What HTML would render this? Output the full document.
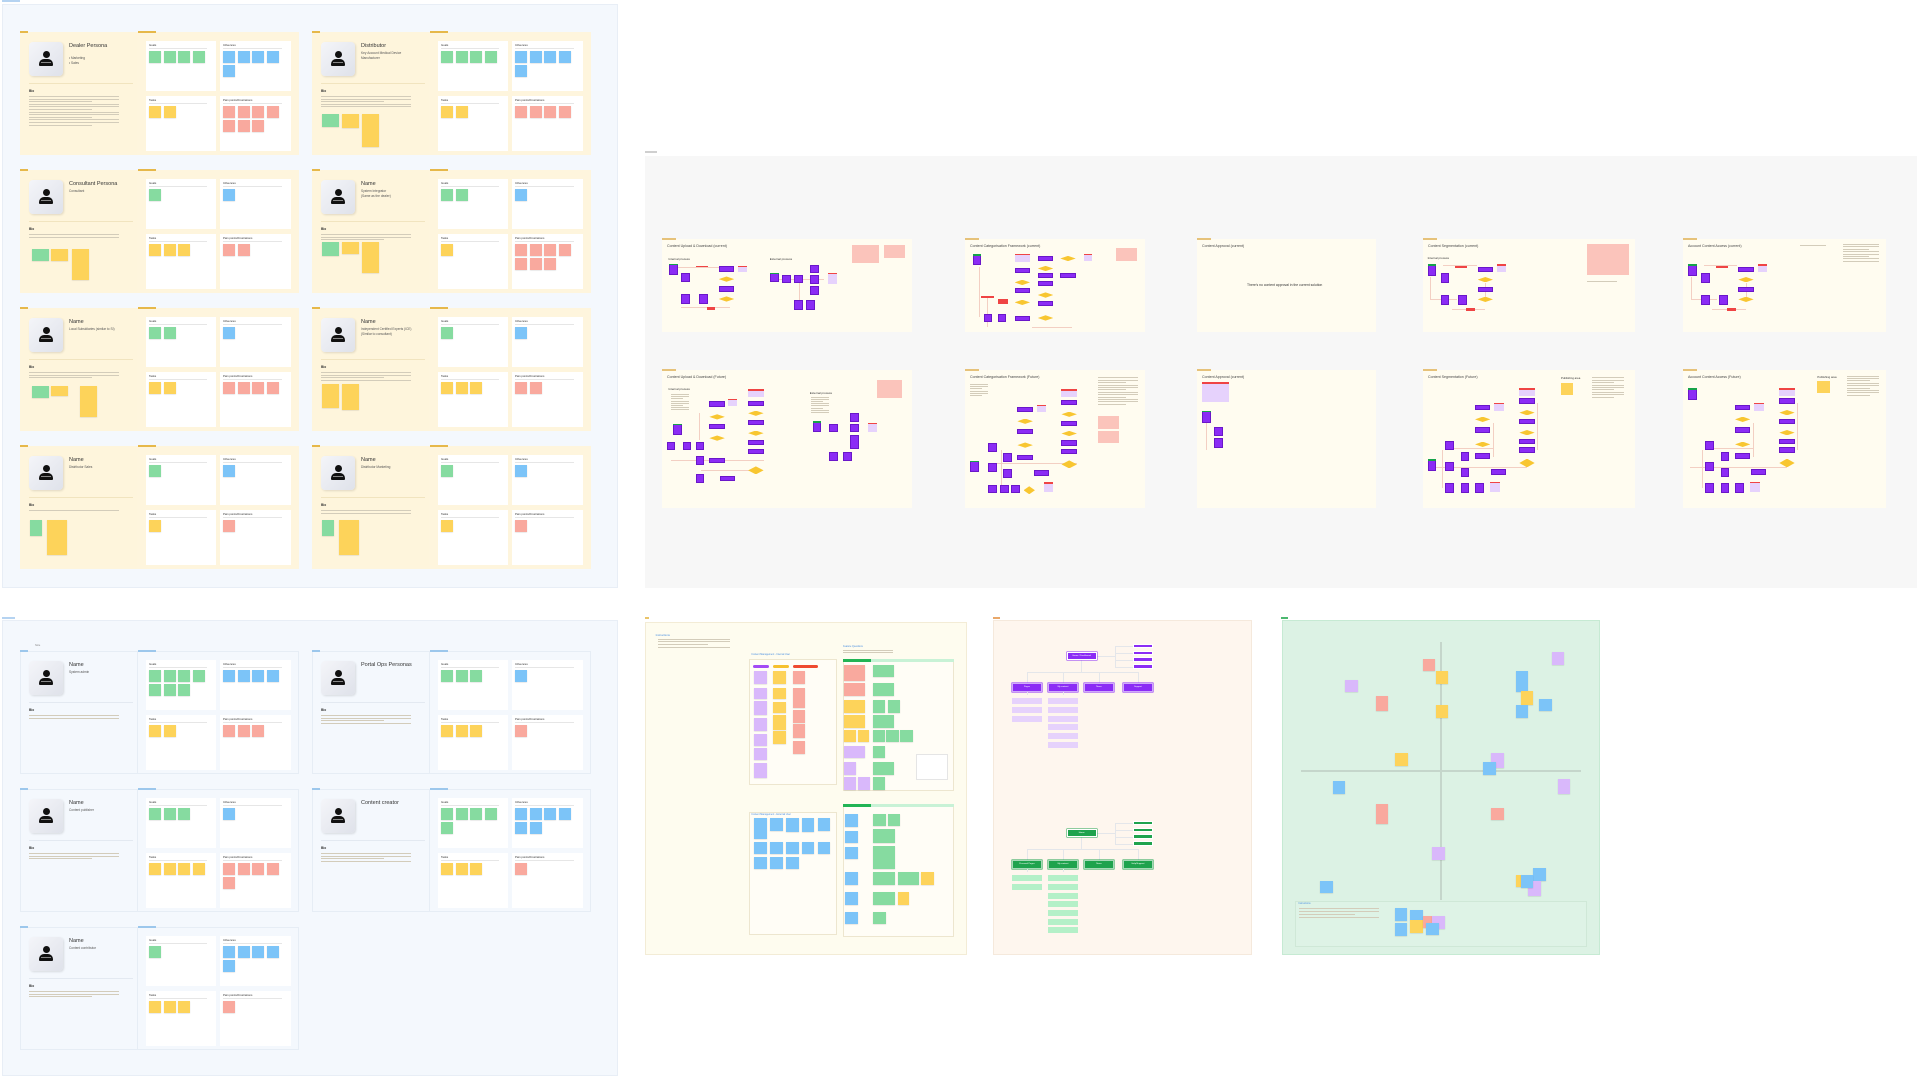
<!DOCTYPE html>
<html><head><meta charset="utf-8">
<style>
html,body{margin:0;padding:0;background:#fff;width:1920px;height:1078px;overflow:hidden;font-family:"Liberation Sans",sans-serif;}
#c{position:relative;width:1920px;height:1078px;}
#c div{position:absolute;box-sizing:border-box;}
.t{white-space:nowrap;color:#333;line-height:1;}
</style></head><body><div id="c"></div>
<script>
var C=document.getElementById('c');
function R(x,y,w,h,bg,css){var d=document.createElement('div');d.style.cssText='left:'+x+'px;top:'+y+'px;width:'+w+'px;height:'+h+'px;background:'+bg+';'+(css||'');C.appendChild(d);return d;}
function T(x,y,s,sz,col,css){var d=document.createElement('div');d.className='t';d.style.cssText='left:'+x+'px;top:'+y+'px;font-size:'+sz+'px;color:'+(col||'#333')+';'+(css||'');d.textContent=s;C.appendChild(d);return d;}
var GR='#86dba0',BL='#7cc4f8',YE='#fdd35a',SA='#f9a99e',PU='#d9b8fb',PP='#8b2cf5',DI='#f8c630',RD='#ef4444',GN='#16a34a',LG='#b4f0c8',LP='#e6d2fc';
function note(x,y,w,h,c){R(x,y,w,h,c,'box-shadow:0 0.5px 1px rgba(0,0,0,.15);');}
function lines(x,y,w,n,gap){for(var i=0;i<n;i++)R(x,y+i*gap,w*(i%3==2?0.7:1),0.6,'#d3ccba');}

/* ===== sections ===== */
R(2,4,616,584,'#f4f8fd','border:1px solid #e8eef6;');R(2,0,18,2,'#b5d3f1');
R(2,620,616,456,'#f4f8fd','border:1px solid #e8eef6;');R(2,617,13,2,'#b5d3f1');
R(645,156,1272,432,'#f7f7f7');R(645,151,12,1.5,'#cfcfcf');
R(645,622,322,333,'#fefcef','border:1px solid #f3ecd6;');R(645,617,4,2,'#e9c46a');
R(993,620,259,335,'#fef6ee','border:1px solid #f5e9dc;');R(993,617,7,2,'#e9a86a');
R(1282,620,318,335,'#dcf2e4','border:1.5px solid #c6ead3;');R(1281,617,7,2,'#4cb870');

/* ===== persona cards ===== */
function avatar(x,y){R(x,y,34,34,'linear-gradient(135deg,#f4f5f9,#dfe2ea)','border-radius:4px;box-shadow:1px 1px 2px rgba(0,0,0,.12);');
 R(x+13.5,y+9,7,7,'#111','border-radius:50%;');R(x+10,y+17,14,7,'#111','border-radius:5px 5px 1px 1px;');R(x+12,y+20,10,0.8,'#888');}
function grid(bx,by,n,c,perRow){perRow=perRow||4;for(var i=0;i<n;i++){var r=Math.floor(i/perRow),k=i%perRow;note(bx+3+k*14.5,by+10+r*14.3,12,12,c);}}
function card(x,y,blue,title,subs,g,inf,ta,pa,bio){
 var lb=blue?'#f4f8fd':'#fef5dc',rb=blue?'#f4f8fd':'#fef5dd';
 R(x,y,279,123,lb,blue?'border:1px solid #e6edf5;':'');
 R(x+117,y,162,123,rb,blue?'border:1px solid #e6edf5;':'');
 var tc=blue?'#9cc7ec':'#e6b84a';R(x,y-1,8,1.5,tc);R(x+118,y-1,18,1.5,tc);
 avatar(x+9,y+10);
 T(x+49,y+12,title,5.5,'#333');
 for(var i=0;i<subs.length;i++)T(x+49,y+20+i*5,subs[i],3.2,'#555');
 R(x+9,y+51,104,0.6,blue?'#e3e9f1':'#f1e4bf');
 T(x+9,y+58,'Bio',3.2,'#333','font-weight:bold;');
 lines(x+9,y+64,90,bio||3,2.6);
 var boxes=[[126,9,70,50,'Goals',g,GR],[200,9,71,50,'Influences',inf,BL],[126,64,70,55,'Tasks',ta,YE],[200,64,71,55,'Pain points/Frustrations',pa,SA]];
 boxes.forEach(function(b){R(x+b[0],y+b[1],b[2],b[3],'#fff');T(x+b[0]+3,y+b[1]+3,b[4],2.8,'#333');R(x+b[0]+3,y+b[1]+7,b[2]-12,0.5,'#e6e6e6');grid(x+b[0],y+b[1],b[5],b[6]);});
}
card(20,32,0,'Dealer Persona',['','• Marketing','• Sales'],4,5,2,7,12);
card(312,32,0,'Distributor',['Key Account Medical Device','Manufacturer'],4,5,2,4,5);
note(322,114,17,13,GR);note(342,114,17,14,YE);note(362,114,17,33,YE);
card(20,170,0,'Consultant Persona',['Consultant'],1,1,3,2,2);
note(32,249,17,12,GR);note(51,249,17,12,YE);note(72,249,17,31,YE);
card(312,170,0,'Name',['System Integrator','(Same as the dealer)'],2,1,1,7,3);
note(322,242,17,14,GR);note(342,242,17,12,YE);note(362,242,17,31,YE);
card(20,308,0,'Name',['Local Subsidiaries (similar to SI)'],2,1,2,4,3);
note(32,386,17,12,GR);note(51,386,17,10,YE);note(80,386,17,31,YE);
card(312,308,0,'Name',['Independent Certified Experts (ICE)','(Similar to consultant)'],1,1,3,2,4);
note(322,384,17,24,YE);note(342,384,17,26,YE);
card(20,446,0,'Name',['Distributor Sales'],1,1,1,1,1);
note(30,520,12,16,GR);note(47,520,20,35,YE);
card(312,446,0,'Name',['Distributor Marketing'],1,1,1,1,2);
note(322,520,12,16,GR);note(339,520,20,35,YE);
T(35,645,'Note',2.5,'#888');
card(20,651,1,'Name',['System admin'],7,4,2,3,2);
card(312,651,1,'Portal Ops Personas',[],3,1,3,1,4);
card(20,789,1,'Name',['Content publisher'],3,1,4,5,3);
card(312,789,1,'Content creator',[],5,6,3,1,4);
card(20,927,1,'Name',['Content contributor'],1,5,3,1,0);

/* ===== flow cards ===== */
function fc(x,y,w,h,title){R(x,y,w,h,'#fffcf0');R(x,y-1,14,1.5,'#e6c27a');T(x+5,y+6,title,3.6,'#444');}
fc(662,239,250,93,'Content Upload & Download (current)');
fc(965,239,180,93,'Content Categorisation Framework (current)');
fc(1197,239,179,93,'Content Approval (current)');
fc(1423,239,212,93,'Content Segmentation (current)');
fc(1683,239,203,93,'Account Content Access (current)');
fc(662,370,250,138,'Content Upload & Download (Future)');
fc(965,370,180,138,'Content Categorisation Framework (Future)');
fc(1197,370,179,138,'Content Approval (current)');
fc(1423,370,212,138,'Content Segmentation (Future)');
fc(1683,370,203,138,'Account Content Access (Future)');
T(1247,284,"There's no content approval in the current solution",3.4,'#333');

function E(list,ox,oy,sx,sy,dx){dx=dx||0;list.forEach(function(e){var t=e[0],x=ox+(e[1]+dx)*sx,y=oy+e[2]*sy,w=e[3]*sx,h=e[4]*sy;
 if(t=='p'){R(x,y,w,h,PP,'border:0.8px solid #6a17c9;');}
 else if(t=='l'){R(x,y,w,h,LP);R(x,y,w,1.3,RD);}
 else if(t=='d'){R(x,y,w,h,DI,'clip-path:polygon(50% 0,100% 50%,50% 100%,0 50%);');}
 else if(t=='r'){R(x,y,w,h,RD);}
 else if(t=='s'){R(x,y,w,h,'#fbc4bb');}
 else if(t=='y'){R(x,y,w,h,YE);}
 else if(t=='g'){R(x,y,w,h,GN);}
 else if(t=='ln'){R(x,y,w,h,'#f3cfc3');}
});}
var z2x=640,z2y=141,s2x=0.408,s2y=0.332;
var Arow1=[['ln',80,380,140,2],['ln',100,500,120,2],['ln',330,415,120,2],['ln',390,410,2,75],
['p',70,370,22,35],['g',70,370,22,5],['p',100,397,22,28],['p',100,462,22,28],['p',145,462,22,28],['p',193,378,38,16],['p',193,438,38,16],
['p',318,397,22,28],['g',318,397,22,5],['p',348,403,22,24],['p',378,403,22,24],['p',416,372,22,26],['p',416,404,22,26],['p',416,437,22,26],['p',378,480,22,28],['p',406,480,22,28],
['l',240,375,22,20],['l',462,398,22,32],['d',193,408,38,16],['d',193,468,38,16],['r',137,375,30,6],['r',163,500,22,8],['s',520,313,65,55],['s',597,313,53,38]];
E(Arow1,z2x,z2y,s2x,s2y);
T(z2x+70*s2x,z2y+352*s2y,'Internal process',3,'#333');T(z2x+318*s2x,z2y+352*s2y,'External process',3,'#333');
var Brow1=[['ln',830,380,2,150],['ln',850,470,2,90],['ln',960,560,100,2],
['p',817,340,20,35],['g',817,340,20,5],['p',918,382,38,16],['p',975,345,38,16],['p',975,398,38,16],['p',975,422,38,16],['p',918,443,38,16],['p',975,482,38,16],['p',1030,398,38,16],['p',843,520,20,26],['p',877,520,20,26],['p',918,526,38,16],
['l',918,340,38,24],['l',1088,340,20,20],['d',1030,346,38,16],['d',975,376,38,16],['d',918,418,38,16],['d',975,456,38,16],['d',918,478,38,16],['d',975,525,38,16],['r',877,476,25,16],['r',837,468,30,6],['s',1167,323,52,38]];
E(Brow1,z2x,z2y,s2x,s2y);
var Arow2=[['ln',75,960,230,2],['ln',150,990,150,2],['ln',145,820,2,80],
['p',82,851,22,35],['g',82,851,22,5],['p',67,906,20,26],['p',105,906,20,26],['p',137,906,20,26],['p',137,950,20,26],['p',137,1003,20,26],['p',170,784,38,16],['p',170,852,38,16],['p',170,955,38,16],['p',195,1008,38,16],['p',265,782,38,16],['p',265,840,38,16],['p',265,900,38,16],['p',265,928,38,16],
['p',423,843,20,35],['g',423,843,20,5],['p',463,851,22,26],['p',515,820,22,26],['p',515,852,22,26],['p',515,885,22,42],['p',463,937,22,26],['p',497,937,22,26],
['l',216,777,22,22],['l',265,748,38,24],['l',560,848,22,30],['d',170,823,38,16],['d',170,887,38,16],['d',265,812,38,16],['d',265,872,38,16],['d',265,980,38,24],['s',580,720,62,55]];
E(Arow2,z2x,z2y,s2x,s2y);
T(z2x+70*s2x,z2y+745*s2y,'Internal process',3,'#333');T(z2x+416*s2x,z2y+757*s2y,'External process',3,'#333');
lines(z2x+75*s2x,z2y+762*s2y,18,8,2.2);lines(z2x+418*s2x,z2y+770*s2y,18,8,2.2);
var Brow2=[['ln',870,970,200,2],['ln',885,930,2,110],
['p',808,963,22,35],['g',808,963,22,5],['p',852,910,22,26],['p',852,970,22,26],['p',852,1035,22,26],['p',883,1035,22,26],['p',910,1035,22,26],['p',890,940,22,26],['p',890,988,22,26],['p',925,800,38,16],['p',925,866,38,16],['p',925,945,38,16],['p',965,992,38,16],['p',1033,780,38,16],['p',1033,842,38,16],['p',1033,902,38,16],['p',1033,928,38,16],
['l',972,795,22,22],['l',1033,748,38,24],['l',990,1028,22,30],['d',925,836,38,16],['d',925,908,38,16],['d',1033,815,38,16],['d',1033,873,38,16],['d',1033,962,38,24],['d',940,1040,28,24],['s',1122,828,52,38],['s',1122,872,52,38]];
E(Brow2,z2x,z2y,s2x,s2y);
lines(z2x+808*s2x,z2y+732*s2y,18,6,2.2);lines(z2x+1122*s2x,z2y+712*s2y,40,12,2.4);
var z5x=1130,z5y=180,s5=1/3;
E([['l',216,607,80,60],['p',216,692,27,36],['g',216,692,27,5],['p',253,740,27,28],['p',253,775,27,28],['ln',228,730,2,80]],z5x,z5y,s5,s5);
var z8x=1410,z8y=230,s8=1/3;
var Drow1=[['ln',60,140,2,70],['ln',60,207,80,2],['ln',100,106,100,2],['ln',125,236,100,2],['ln',225,160,2,50],
['p',53,103,26,35],['g',53,103,26,5],['p',92,130,26,28],['p',92,196,26,28],['p',145,196,26,28],['p',203,110,46,16],['p',203,170,46,16],['l',261,103,28,24],['d',203,141,46,16],['d',203,200,46,16],['r',136,107,36,6],['r',168,233,28,9]];
E(Drow1,z8x,z8y,s8,s8,0);E([['s',530,43,127,92]],z8x,z8y,s8,s8,0);
E(Drow1,z8x,z8y,s8,s8,782);
T(z8x+53*s8,z8y+80*s8,'Internal process',3,'#333');
lines(z8x+1300*s8,z8y+42*s8,36,8,2.4);lines(z8x+530*s8,z8y+152*s8,30,1,2);lines(z8x+1170*s8,z8y+44*s8,26,1,2);
var Drow2=[['ln',60,710,290,2],['ln',110,655,140,2],['ln',95,660,2,115],['ln',380,520,2,140],['ln',250,580,2,100],
['p',105,633,26,28],['p',105,695,26,28],['p',105,760,26,28],['p',152,665,26,28],['p',152,713,26,28],['p',152,760,26,28],['p',195,760,26,28],['p',195,525,46,16],['p',195,592,46,16],['p',195,670,46,16],['p',243,718,46,16],['p',328,505,46,16],['p',328,566,46,16],['p',328,626,46,16],['p',328,652,46,16],
['l',253,518,28,24],['l',328,475,46,24],['l',241,755,28,32],['d',195,560,46,16],['d',195,635,46,16],['d',328,540,46,16],['d',328,600,46,16],['d',328,686,46,26]];
E(Drow2,z8x,z8y,s8,s8,0);E(Drow2,z8x,z8y,s8,s8,780);
E([['p',53,688,26,35],['g',53,688,26,5],['y',453,458,37,36]],z8x,z8y,s8,s8,0);
E([['p',835,475,26,35],['g',835,475,26,5],['y',1222,452,37,36]],z8x,z8y,s8,s8,0);
T(z8x+453*s8,z8y+442*s8,'Publishing area',2.8,'#333');T(z8x+1222*s8,z8y+437*s8,'Publishing area',2.8,'#333');
lines(z8x+545*s8,z8y+442*s8,32,9,2.4);lines(z8x+1312*s8,z8y+437*s8,32,9,2.4);

/* ===== yellow section ===== */
var X3=function(r){return 640+r*0.625},Y3=function(r){return 610+r*0.337};
function N3(x,y,x2,y2,c){note(X3(x),Y3(y),X3(x2)-X3(x),Y3(y2)-Y3(y),c);}
T(X3(25),Y3(70),'Instructions',2.8,'#4a8fe0');lines(X3(28),Y3(85),72,4,2.8);
R(X3(175),Y3(145),X3(315)-X3(175),Y3(520)-Y3(145),'#fffdf6','border:0.6px solid #ede6cf;');
R(X3(175),Y3(600),X3(315)-X3(175),Y3(965)-Y3(600),'#fffdf6','border:0.6px solid #ede6cf;');
R(X3(325),Y3(145),X3(503)-X3(325),Y3(538)-Y3(145),'#fffdf6','border:0.6px solid #ede6cf;');
R(X3(325),Y3(575),X3(503)-X3(325),Y3(970)-Y3(575),'#fffdf6','border:0.6px solid #ede6cf;');
T(X3(178),Y3(130),'Content Management - Internal User',2.4,'#4a8fe0');T(X3(178),Y3(605),'Content Management - External User',2.4,'#4a8fe0');
T(X3(325),Y3(108),'Feature Questions',2.4,'#4a8fe0');lines(X3(325),Y3(120),50,2,2);
R(X3(180),Y3(162),16,3.6,'#a34bf5','border-radius:2px;');R(X3(212),Y3(162),16,3.6,'#f6c12f','border-radius:2px;');R(X3(244),Y3(162),25,3.6,'#ef4a30','border-radius:2px;');
[[182,182,220],[182,230,265],[182,270,312],[182,320,360],[182,368,405],[182,410,445],[182,455,500]].forEach(function(a){N3(a[0],a[1],a[0]+21,a[2],PU);});
[[212,182,220],[212,230,265],[212,272,305],[212,312,355],[212,360,398]].forEach(function(a){N3(a[0],a[1],a[0]+22,a[2],YE);});
[[244,182,220],[244,230,290],[244,297,335],[244,338,380],[244,390,428]].forEach(function(a){N3(a[0],a[1],a[0]+20,a[2],SA);});
R(X3(325),Y3(145),X3(370)-X3(325),3.4,'#22b455');R(X3(370),Y3(145),X3(503)-X3(370),3.4,'#c8f2d6');
R(X3(325),Y3(575),X3(370)-X3(325),3.4,'#22b455');R(X3(370),Y3(575),X3(503)-X3(370),3.4,'#c8f2d6');
[[326,162,360,212,SA],[326,218,360,255,SA],[326,268,360,305,YE],[326,312,360,350,YE],[372,162,406,200,GR],[372,218,406,255,GR],[372,312,406,350,GR],[372,268,392,305,GR],[396,268,416,305,GR],
[326,355,346,392,YE],[348,355,366,392,YE],[372,355,392,392,GR],[394,355,414,392,GR],[416,355,436,392,GR],[326,405,360,440,PU],[372,405,392,440,GR],[326,452,346,490,PU],[372,452,406,490,GR],
[326,497,346,533,PU],[348,497,368,533,PU],[372,497,392,533,GR]].forEach(function(a){N3(a[0],a[1],a[2],a[3],a[4]);});
R(X3(442),Y3(428),X3(493)-X3(442),Y3(503)-Y3(428),'#fff','border:0.5px solid #e5e5e5;');
[183,208,234,259,284].forEach(function(x,i){N3(x,618,x+20,[680,655,660,660,655][i],BL);N3(x,688,x+20,725,BL);if(i<3)N3(x,732,x+20,770,BL);});
[[605,645],[655,690],[702,738],[778,815],[838,875],[895,932]].forEach(function(a){N3(328,a[0],348,a[1],BL);});
[[373,605,393,642,GR],[396,605,416,642,GR],[373,650,408,692,GR],[373,700,408,770,GR],[373,778,408,815,GR],[373,838,408,875,GR],[373,895,393,932,GR],[412,778,446,815,GR],[450,778,470,815,YE],[412,838,430,875,YE]].forEach(function(a){N3(a[0],a[1],a[2],a[3],a[4]);});

/* ===== peach section ===== */
var X11=function(r){return 990+r/3},Y11=function(r){return 615+r/3};
function org(top,main,light,sm,col,labels){
 var L='#e4e6ea';
 R(X11(274),Y11(top+26),1,Y11(top+60)-Y11(top+26),L);
 R(X11(111),Y11(top+60),X11(443)-X11(111),1,L);
 [111,219,327,443].forEach(function(x){R(X11(x),Y11(top+60),1,Y11(top+95)-Y11(top+60),L);});
 R(X11(320),Y11(top+13),X11(376)-X11(320),1,L);R(X11(376),Y11(top-17),1,Y11(top+48)-Y11(top-17),L);
 [-24,-3,17,38].forEach(function(o){R(X11(376),Y11(top+o+7),X11(430)-X11(376),1,L);R(X11(430),Y11(top+o),X11(488)-X11(430),14/3,col,'border:0.6px solid #fff;');});
 R(X11(230),Y11(top),30,26/3,col,'border:0.8px solid #fff;box-shadow:0 0 0 0.5px '+col+';');
 [65,173,281,398].forEach(function(x,i){R(X11(x),Y11(top+95),92/3,26/3,col,'box-shadow:0 0 0 0.5px '+col+';border:0.6px solid rgba(255,255,255,.6);');T(X11(x)+15.3,Y11(top+95)+3,labels[i],2.2,'#fff','transform:translateX(-50%);');});
 T(X11(275),Y11(top)+3.2,labels[4],2.2,'#fff','transform:translateX(-50%);');
 R(X11(111),Y11(top+121),1,3,L);R(X11(219),Y11(top+121),1,3,L);
 for(var i=0;i<sm[0];i++)R(X11(65),Y11(top+140+i*26.5),92/3,6,light);
 for(var i=0;i<sm[1];i++)R(X11(173),Y11(top+140+i*26),92/3,6,light);
}
org(110,PP,LP,[3,6],'#8b2cf5',['Pages','My content','News','Support','Home / Dashboard']);
org(641,'#1aa34a',LG,[2,7],'#1ea34d',['Personal Pages','My content','News','Help/Support','Home']);

/* ===== green section ===== */
var X10=function(r){return 1280+r/3},Y10=function(r){return 615+r/3};
R(X10(481),Y10(80),2,Y10(855)-Y10(80),'#c5d6cb');R(X10(62),Y10(466),X10(903)-X10(62),2,'#c5d6cb');
[[429,131,37,37,SA],[467,169,37,37,YE],[815,112,37,37,PU],[196,194,37,37,PU],[287,244,37,45,SA],[708,169,37,62,BL],[723,228,37,42,YE],[778,252,37,37,BL],[708,271,37,37,BL],[467,271,37,37,YE],
[346,415,37,37,YE],[634,415,37,45,PU],[610,440,37,40,BL],[158,499,37,37,BL],[833,492,37,45,PU],[287,566,37,62,SA],[634,578,37,37,SA],[457,697,37,37,PU],[121,798,37,37,BL],
[760,758,37,40,BL],[708,780,18,37,YE],[745,797,37,45,PU],[723,781,37,37,BL]].forEach(function(a){note(X10(a[0]),Y10(a[1]),a[2]/3,a[3]/3,a[4]);});
R(X10(45),Y10(858),X10(920)-X10(45),Y10(995)-Y10(858),'#def3e6','border:0.6px solid #cfe8d7;');
T(X10(55),Y10(865),'Instructions',2.4,'#4a8fe0');lines(X10(58),Y10(880),80,4,2.8);
[[344,880,37,37,BL],[344,924,37,40,BL],[391,884,37,30,BL],[391,916,37,37,YE],[428,904,30,35,SA],[457,904,37,37,PU],[439,924,37,37,BL]].forEach(function(a){note(X10(a[0]),Y10(a[1]),a[2]/3,a[3]/3,a[4]);});
</script>
</body></html>
